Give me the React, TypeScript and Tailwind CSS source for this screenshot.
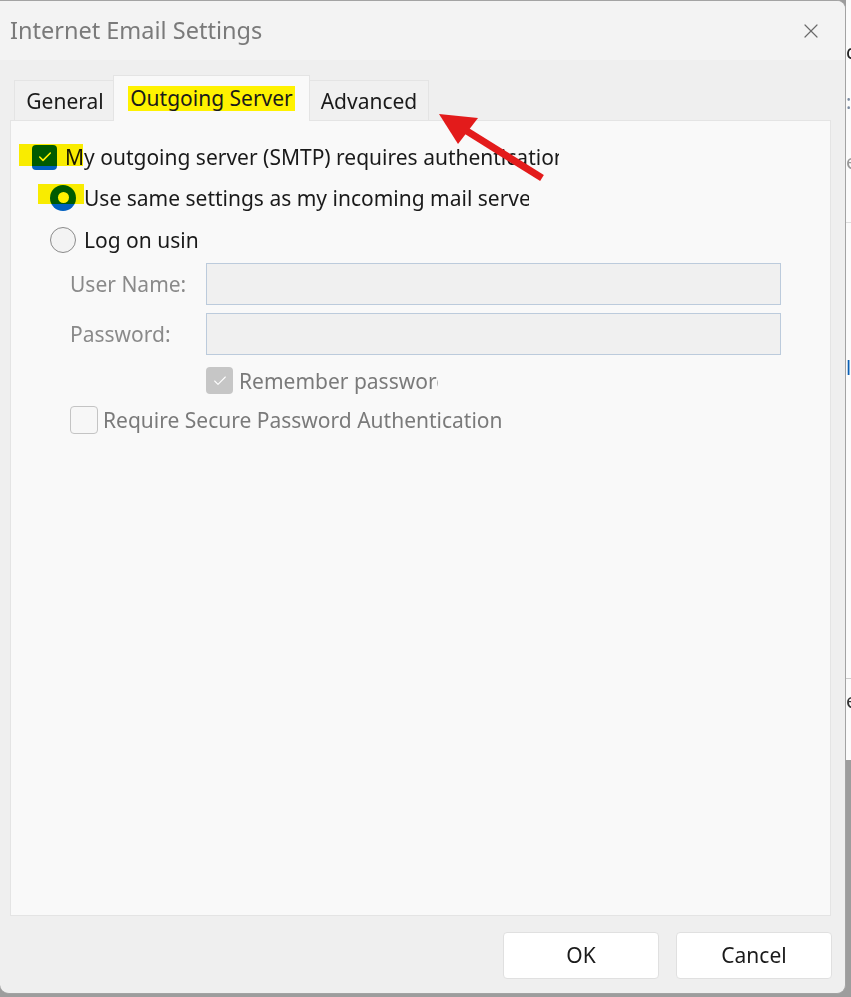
import { X, Check } from "lucide-react";

function Highlight({ className }: { className: string }) {
  return (
    <span
      className={`pointer-events-none absolute bg-[#fff200] mix-blend-multiply ${className}`}
    />
  );
}

function Clip({ width, children, className = "" }: { width: string; children: React.ReactNode; className?: string }) {
  return (
    <span className={`block shrink-0 overflow-hidden whitespace-nowrap ${width} ${className}`}>
      {children}
    </span>
  );
}

export default function App() {
  return (
    <div className="relative flex h-[997px] w-[851px] overflow-hidden bg-[#9d9d9d] font-['Noto_Sans',sans-serif]">
      {/* dialog */}
      <div className="flex h-[994px] w-[846px] shrink-0 flex-col overflow-hidden rounded-tr-[9px] rounded-b-[9px] border-t border-r border-b border-[#a3a3a3] bg-[#efefef]">
        {/* title bar */}
        <div className="flex h-[59px] shrink-0 items-center justify-between bg-[#f3f3f3] pl-[10px] pr-[22px]">
          <span className="text-[23.5px] text-[#7a7a7a]">Internet Email Settings</span>
          <X className="size-[24px] text-[#6a6a6a]" strokeWidth={1.2} />
        </div>

        {/* tabs */}
        <div className="mt-[14px] flex h-[46px] items-end pl-[14px] text-[21px] text-[#1a1a1a]">
          <div className="flex h-[40px] w-[99px] items-center justify-center border-t border-l border-[#e4e4e4] bg-[#f0f0f0] pt-[2px] pl-[2px]">
            General
          </div>
          <div className="z-10 -mb-px flex h-[46px] w-[197px] items-center justify-center border-x border-t border-[#e4e4e4] bg-[#f9f9f9]">
            <span className="bg-[#fff200] px-[2px] leading-[25px]">Outgoing Server</span>
          </div>
          <div className="flex h-[40px] w-[119px] items-center justify-center border-t border-r border-[#e4e4e4] bg-[#f0f0f0] pt-[2px]">
            Advanced
          </div>
        </div>

        {/* panel */}
        <div className="ml-[10px] flex h-[796px] w-[821px] flex-col border border-[#e4e4e4] bg-[#f9f9f9] pt-[23px] text-[21px] leading-[26px] text-[#1a1a1a]">
          <div className="relative flex h-[26px] items-center pl-[21px]">
            <span className="flex size-[25px] shrink-0 items-center justify-center rounded-[4px] bg-[#0060c0]">
              <Check className="size-[16px] text-white" strokeWidth={2.4} />
            </span>
            <Clip width="w-[494px]" className="ml-[8px]">My outgoing server (SMTP) requires authentication</Clip>
            <Highlight className="left-[8px] top-[0px] h-[22px] w-[64px]" />
          </div>

          <div className="relative mt-[14px] flex h-[27px] items-center pl-[39px]">
            <span className="flex size-[26px] shrink-0 items-center justify-center rounded-full bg-[#0060c0]">
              <span className="size-[11px] rounded-full bg-white" />
            </span>
            <Clip width="w-[445px]" className="ml-[8px]">Use same settings as my incoming mail server</Clip>
            <Highlight className="left-[27px] top-[0px] h-[20px] w-[46px]" />
          </div>

          <div className="mt-[15px] flex h-[27px] items-center pl-[39px]">
            <span className="size-[26px] shrink-0 rounded-full border border-[#8a8a8a] bg-[#f3f3f3]" />
            <Clip width="w-[116px]" className="ml-[8px]">Log on using</Clip>
          </div>

          <div className="mt-[10px] flex flex-col gap-[8px] pl-[59px] text-[#8a8a8a]">
            <div className="flex items-center">
              <span className="w-[136px]">User Name:</span>
              <div className="h-[42px] w-[575px] border border-[#bccbdc] bg-[#f0f0f0]" />
            </div>
            <div className="flex items-center">
              <span className="w-[136px]">Password:</span>
              <div className="h-[42px] w-[575px] border border-[#bccbdc] bg-[#f0f0f0]" />
            </div>
          </div>

          <div className="mt-[12px] flex h-[27px] items-center pl-[195px] text-[#7a7a7a]">
            <span className="flex size-[27px] shrink-0 items-center justify-center rounded-[4px] bg-[#c6c6c6]">
              <Check className="size-[16px] text-white" strokeWidth={1.6} />
            </span>
            <Clip width="w-[199px]" className="ml-[6px]">Remember password</Clip>
          </div>

          <div className="mt-[12px] flex h-[28px] items-center pl-[59px] text-[#7a7a7a]">
            <span className="size-[28px] shrink-0 rounded-[4px] border border-[#c4c4c4] bg-[#f7f7f7]" />
            <span className="ml-[5px]">Require Secure Password Authentication</span>
          </div>
        </div>

        {/* buttons */}
        <div className="mt-[16px] flex justify-end gap-[17px] pr-[13px]">
          <button className="h-[47px] w-[156px] rounded-[4px] border border-[#e0e0e0] bg-white text-[21px] text-[#1a1a1a]">
            OK
          </button>
          <button className="h-[47px] w-[156px] rounded-[4px] border border-[#e0e0e0] bg-white text-[21px] text-[#1a1a1a]">
            Cancel
          </button>
        </div>
      </div>

      {/* background window sliver */}
      <div className="flex h-[760px] w-[5px] flex-col overflow-hidden bg-[#fbfbfb] text-[20px] leading-none">
        <span className="mt-[42px] text-[#222]">c</span>
        <span className="mt-[30px] text-[#7a8aa0]">:</span>
        <span className="mt-[40px] text-[#999]">e</span>
        <span className="mt-[50px] h-px w-full bg-[#ddd]" />
        <span className="mt-[135px] text-[#0a5fb4]">l</span>
        <span className="mt-[300px] h-px w-full bg-[#ccc]" />
        <span className="mt-[12px] text-[#333]">e</span>
      </div>

      {/* red arrow annotation */}
      <svg className="pointer-events-none absolute inset-0" width="851" height="997" viewBox="0 0 851 997">
        <line x1="542" y1="178" x2="462" y2="128" stroke="#e31b1b" strokeWidth="7" />
        <polygon points="439,114 478,118 458,144" fill="#e31b1b" />
      </svg>
    </div>
  );
}
